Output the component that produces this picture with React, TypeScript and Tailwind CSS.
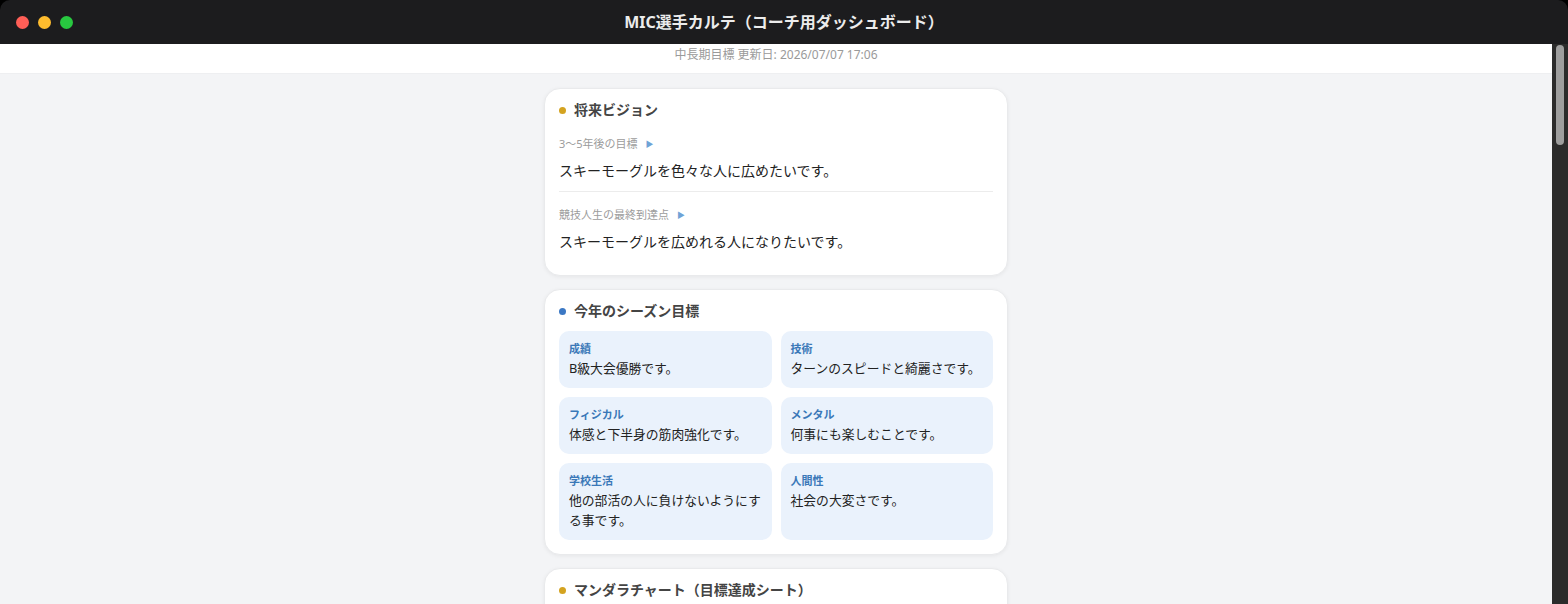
const font = { fontFamily: '"Noto Sans", "Noto Sans CJK JP", sans-serif' };

type Goal = { label: string; text: string };

const visionItems: Goal[] = [
  { label: '3〜5年後の目標', text: 'スキーモーグルを色々な人に広めたいです。' },
  { label: '競技人生の最終到達点', text: 'スキーモーグルを広めれる人になりたいです。' },
];

const seasonGoals: Goal[] = [
  { label: '成績', text: 'B級大会優勝です。' },
  { label: '技術', text: 'ターンのスピードと綺麗さです。' },
  { label: 'フィジカル', text: '体感と下半身の筋肉強化です。' },
  { label: 'メンタル', text: '何事にも楽しむことです。' },
  { label: '学校生活', text: '他の部活の人に負けないようにする事です。' },
  { label: '人間性', text: '社会の大変さです。' },
];

function CardTitle({ title, dot }: { title: string; dot: string }) {
  return (
    <div className="flex items-center gap-[8px] h-[20px]">
      <span className={`w-[7px] h-[7px] rounded-full ${dot}`} />
      <h2 className="text-[14px] font-bold text-[#444] leading-[20px]">{title}</h2>
    </div>
  );
}

function Card({ children }: { children: React.ReactNode }) {
  return (
    <section className="bg-white rounded-[16px] border border-[#e9eaec] shadow-[0_1px_4px_rgba(0,0,0,0.06)] px-[14px] pt-[11px] pb-[14px]">
      {children}
    </section>
  );
}

export default function App() {
  return (
    <div className="w-[1568px] h-[604px] overflow-hidden bg-black flex flex-col" style={font}>
      {/* title bar */}
      <div className="relative h-[44px] shrink-0 bg-[#1c1c1e] rounded-t-[10px] flex items-center justify-center">
        <div className="absolute left-[16px] top-[16px] flex gap-[9px]">
          <span className="w-[13px] h-[13px] rounded-full bg-[#ff5f57]" />
          <span className="w-[13px] h-[13px] rounded-full bg-[#febc2e]" />
          <span className="w-[13px] h-[13px] rounded-full bg-[#28c840]" />
        </div>
        <h1 className="text-[16px] font-bold text-[#ececec]">MIC選手カルテ（コーチ用ダッシュボード）</h1>
      </div>

      <div className="flex flex-1 min-h-0">
        <main className="flex-1 bg-[#f3f4f6] overflow-hidden">
          <div className="h-[30px] bg-white border-b border-[#eeeff1] flex justify-center pt-[2px]">
            <p className="text-[12px] text-[#9a9a9a] leading-[18px]">中長期目標 更新日: 2026/07/07 17:06</p>
          </div>

          <div className="w-[464px] mx-auto pt-[14px] flex flex-col gap-[13px]">
            <Card>
              <CardTitle title="将来ビジョン" dot="bg-[#d4a320]" />
              <div>
                {visionItems.map((item, i) => (
                  <div
                    key={item.label}
                    className={i === 0 ? 'pt-[16px] pb-[10px] border-b border-[#ececec]' : 'pt-[15px] pb-[9px]'}
                  >
                    <div className="flex items-center gap-[8px] text-[11px] leading-[16px] text-[#9c9c9c]">
                      <span>{item.label}</span>
                      <span className="text-[8px] text-[#6fa3d6]">▶</span>
                    </div>
                    <p className="mt-[9px] text-[14px] leading-[20px] text-[#222]">{item.text}</p>
                  </div>
                ))}
              </div>
            </Card>

            <Card>
              <CardTitle title="今年のシーズン目標" dot="bg-[#3b78c4]" />
              <div className="mt-[10px] grid grid-cols-2 gap-[9px]">
                {seasonGoals.map((g) => (
                  <div key={g.label} className="bg-[#eaf2fc] rounded-[10px] px-[10px] pt-[10px] pb-[10px]">
                    <div className="text-[11px] font-bold leading-[16px] text-[#3a78b8]">{g.label}</div>
                    <p className="mt-[1px] text-[12.8px] leading-[20px] text-[#222]">{g.text}</p>
                  </div>
                ))}
              </div>
            </Card>

            <Card>
              <CardTitle title="マンダラチャート（目標達成シート）" dot="bg-[#d4a320]" />
              <div className="h-[200px]" />
            </Card>
          </div>
        </main>

        {/* scrollbar */}
        <div className="w-[16px] shrink-0 bg-[#2b2b2b] flex justify-center pt-[1px]">
          <div className="w-[8px] h-[100px] rounded-full bg-[#9e9e9e]" />
        </div>
      </div>
    </div>
  );
}
